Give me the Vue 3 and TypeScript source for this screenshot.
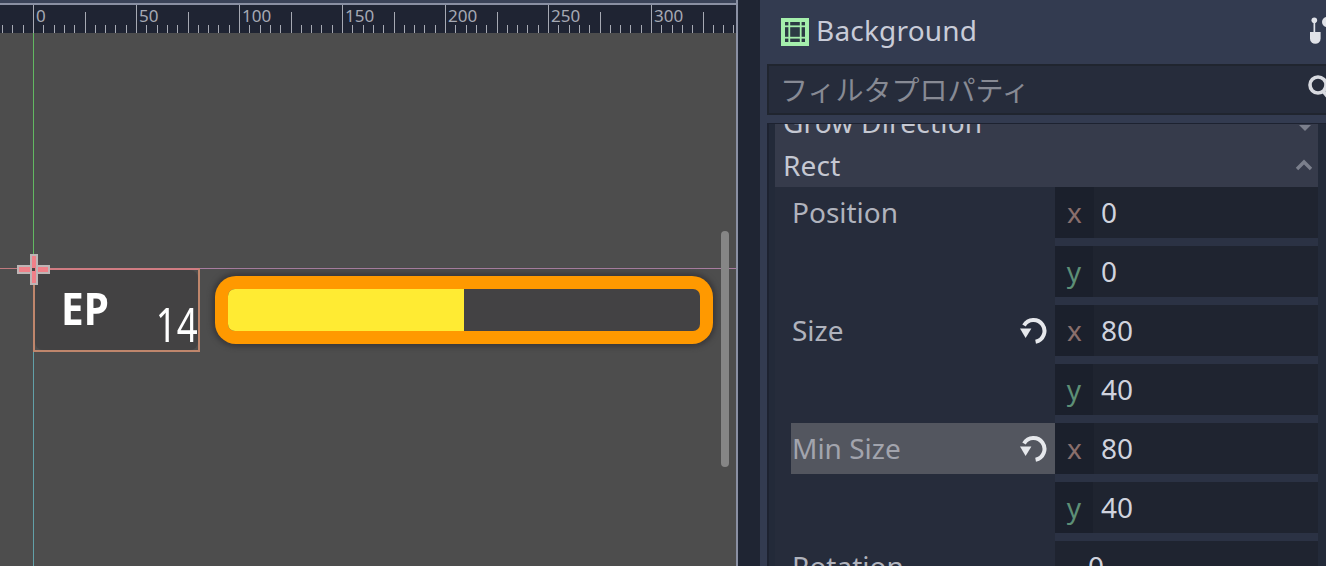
<template>
  <div class="editor">
    <section class="viewport">
      <svg class="ruler" width="736" height="28">
        <line
          v-for="t in ticks"
          :key="t.x"
          :x1="t.x"
          :x2="t.x"
          :y1="t.top"
          y2="28"
          stroke="#a6a9b3"
          stroke-width="1"
        />
        <text v-for="l in rulerLabels" :key="l.text" :x="l.x" y="17" class="ruler-label">{{ l.text }}</text>
      </svg>
      <div class="canvas">
        <div class="guide-h"></div>
        <div class="guide-v"></div>
        <div class="ep-box">
          <span class="ep-title">EP</span>
          <span class="ep-count">14</span>
        </div>
        <div class="bar">
          <div class="bar-track">
            <div class="bar-fill" :style="{ width: barPercent + '%' }"></div>
          </div>
        </div>
        <div class="pivot">
          <i class="pivot-h"></i>
          <i class="pivot-v"></i>
          <i class="pivot-dot"></i>
        </div>
        <div class="v-scroll"></div>
      </div>
    </section>

    <div class="splitter"></div>

    <aside class="inspector">
      <header class="node-row">
        <svg class="node-icon" width="28" height="28" viewBox="0 0 28 28">
          <rect width="28" height="28" fill="#a5efac" />
          <g fill="#2c3a44">
            <template v-for="cx in gridCells" :key="cx[0]">
              <rect v-for="cy in gridCells" :key="cy[0]" :x="cx[0]" :y="cy[0]" :width="cx[1]" :height="cy[1]" />
            </template>
          </g>
        </svg>
        <span class="node-name">Background</span>
        <svg class="node-tool" width="16" height="30" viewBox="0 0 16 30">
          <circle cx="4.3" cy="3.2" r="2.8" fill="#e0e2e8" />
          <rect x="3.5" y="5" width="1.7" height="11" fill="#e0e2e8" />
          <path d="M0 15h10.6v6.5a5.3 5.3 0 0 1-10.6 0z" fill="#e0e2e8" />
          <circle cx="17" cy="5" r="5" fill="#e0e2e8" />
        </svg>
      </header>

      <div class="filter">
        <span class="filter-text">フィルタプロパティ</span>
        <svg class="search" width="18" height="26" viewBox="0 0 18 26">
          <circle cx="10" cy="11" r="8" fill="none" stroke="#d8dae0" stroke-width="3.6" />
          <path d="M15 17l5 6" stroke="#d8dae0" stroke-width="3.6" />
        </svg>
      </div>

      <div class="list-wrap">
        <div class="list">
          <div class="section clipped">
            <span class="section-name">Grow Direction</span>
            <svg class="caret-down" width="14" height="8" viewBox="0 0 14 8"><path d="M1 0h12L7 6z" fill="#7b7f8c" /></svg>
          </div>
          <div class="section rect">
            <span class="section-name">Rect</span>
            <svg class="caret-up" width="18" height="12" viewBox="0 0 18 12"><path d="M2 10l7-7 7 7" fill="none" stroke="#7b7f8c" stroke-width="3.4" /></svg>
          </div>

          <div v-for="prop in props" :key="prop.name" class="prop">
            <div class="prop-label" :class="{ hovered: prop.hovered }">
              <span>{{ prop.name }}</span>
              <svg v-if="prop.changed" class="reset" width="28" height="26" viewBox="0 0 28 26">
                <path d="M4 7.4A11 11 0 1 1 15.6 23.8" fill="none" stroke="#e6e8ec" stroke-width="4" />
                <path d="M0 10.6H11.4L5.6 20z" fill="#e6e8ec" />
              </svg>
            </div>
            <div class="prop-fields">
              <div v-for="f in prop.fields" :key="f.axis" class="field">
                <span v-if="f.axis !== '-'" class="axis" :class="f.axis">{{ f.axis }}</span>
                <span class="value" :class="{ bare: f.axis === '-' }">{{ f.value }}</span>
              </div>
            </div>
          </div>
        </div>
      </div>
    </aside>
  </div>
</template>

<script setup lang="ts">
interface Field {
  axis: string;
  value: string;
}

interface Prop {
  name: string;
  changed?: boolean;
  hovered?: boolean;
  fields: Field[];
}

const ORIGIN = 33;
const PX_PER_UNIT = 2.06;

const barPercent = 50;

// offset and size of the dark cells in the node icon
const gridCells: [number, number][] = [[4, 3.4], [9.2, 9.6], [20.6, 3.4]];

const ticks: { x: number; top: number }[] = [];
for (let u = -15; u <= 340; u += 5) {
  const x = Math.round(ORIGIN + u * PX_PER_UNIT) + 0.5;
  let top = 20;
  if (u % 50 === 0) top = 0;
  else if (u % 25 === 0) top = 7;
  ticks.push({ x, top });
}

const rulerLabels = [0, 50, 100, 150, 200, 250, 300].map((v) => ({
  text: String(v),
  x: ORIGIN + v * PX_PER_UNIT + 3,
}));

const props: Prop[] = [
  { name: 'Position', fields: [{ axis: 'x', value: '0' }, { axis: 'y', value: '0' }] },
  { name: 'Size', changed: true, fields: [{ axis: 'x', value: '80' }, { axis: 'y', value: '40' }] },
  { name: 'Min Size', changed: true, hovered: true, fields: [{ axis: 'x', value: '80' }, { axis: 'y', value: '40' }] },
  { name: 'Rotation', fields: [{ axis: '-', value: '0' }] },
];
</script>

<style scoped>
.editor {
  display: grid;
  grid-template-columns: 738px 22px 566px;
  width: 1326px;
  height: 566px;
  overflow: hidden;
  background: #1f2533;
  font-family: "Noto Sans", "Noto Sans CJK JP", sans-serif;
}

.viewport {
  display: flex;
  flex-direction: column;
  height: 566px;
  padding-top: 3px;
  border-right: 2px solid #8a90a3;
  box-sizing: border-box;
  background: #3a4358;
}

.ruler {
  display: block;
  flex: none;
  border-top: 2px solid #8a90a3;
  background: #1f2433;
}

.ruler-label {
  font-family: "Noto Sans", sans-serif;
  font-size: 17px;
  fill: #a6a9b3;
}

.canvas {
  position: relative;
  flex: 1;
  background: #4d4d4d;
  overflow: hidden;
}

.guide-h {
  position: absolute;
  left: 0;
  right: 0;
  top: 235px;
  height: 1px;
  background: linear-gradient(90deg, #c07a7e 0 33px, #a87da0 33px);
}

.guide-v {
  position: absolute;
  left: 33px;
  top: 0;
  bottom: 0;
  width: 1px;
  background: linear-gradient(#62b862 0 235px, #62a0a8 235px);
}

.ep-box {
  position: absolute;
  left: 33px;
  top: 235px;
  width: 167px;
  height: 84px;
  box-sizing: border-box;
  border: 2px solid #bf866c;
  border-top-color: #d07c82;
  color: #fff;
}

.ep-box::before {
  content: "";
  position: absolute;
  inset: 0;
  background: #434243;
  border-radius: 8px;
}

.ep-title {
  position: absolute;
  left: 26px;
  top: 13px;
  font-size: 44px;
  line-height: 50px;
  font-weight: 700;
  transform: scaleX(0.92);
  transform-origin: left;
  filter: blur(0.6px);
}

.ep-count {
  position: absolute;
  right: 0;
  top: 24px;
  font-size: 47px;
  line-height: 60px;
  font-weight: 400;
  transform: scaleX(0.78);
  transform-origin: right;
}

.bar {
  position: absolute;
  left: 215px;
  top: 243px;
  width: 498px;
  height: 68px;
  padding: 13px;
  box-sizing: border-box;
  background: #ff9900;
  border-radius: 21px;
  box-shadow: 0 0 5px 3px #3a393b;
}

.bar-track {
  height: 100%;
  background: #434244;
  border-radius: 7px;
  overflow: hidden;
}

.bar-fill {
  height: 100%;
  background: #ffeb33;
}

.pivot {
  position: absolute;
  left: 17px;
  top: 221px;
  width: 33px;
  height: 31px;
}

.pivot-h,
.pivot-v {
  position: absolute;
  background: #f08088;
  border: 2px solid #bdb5b5;
  box-sizing: border-box;
}

.pivot-h {
  left: 0;
  top: 11px;
  width: 33px;
  height: 9px;
}

.pivot-v {
  left: 13px;
  top: 0;
  width: 8px;
  height: 31px;
}

.pivot-dot {
  position: absolute;
  left: 15px;
  top: 14px;
  width: 3px;
  height: 3px;
  background: #4a4444;
}

.v-scroll {
  position: absolute;
  left: 721px;
  top: 198px;
  width: 8px;
  height: 236px;
  background: #868686;
  border-radius: 4px;
}

.splitter {
  background: #1f2533;
}

.inspector {
  display: flex;
  flex-direction: column;
  height: 566px;
  background: #333b50;
  overflow: hidden;
}

.node-row {
  display: flex;
  align-items: center;
  flex: none;
  height: 64px;
  padding-left: 21px;
}

.node-name {
  margin: 0 0 4px 7px;
  font-size: 28px;
  letter-spacing: 0.2px;
  color: #c9ccd8;
}

.node-tool {
  margin-left: auto;
}

.filter {
  display: flex;
  align-items: center;
  justify-content: space-between;
  flex: none;
  height: 51px;
  margin-left: 7px;
  padding-left: 11px;
  box-sizing: border-box;
  background: #262c3b;
  border: 2px solid #20252f;
  border-right: 0;
}

.filter-text {
  font-size: 28px;
  line-height: 1;
  margin-top: 1px;
  color: #878a94;
}

.search {
  margin-top: -6px;
}

.list-wrap {
  flex: 1;
  min-height: 0;
  margin: 8px 0 0 7px;
  padding: 0 8px 0 6px;
  background: #232a39;
  border-top: 1px solid #1d2230;
  border-left: 2px solid #1d2230;
  box-sizing: border-box;
  overflow: hidden;
}

.list {
  background: #262c3b;
}

.section {
  display: flex;
  align-items: center;
  justify-content: space-between;
  padding: 0 5px 0 8px;
  background: #363b4b;
  color: #c5c8d2;
  font-size: 28px;
}

.section-name {
  letter-spacing: 0.2px;
}

.section.clipped {
  height: 13px;
  margin-top: -1px;
  align-items: flex-end;
  overflow: hidden;
}

.section.clipped .section-name {
  margin-bottom: -5px;
}

.caret-down {
  margin-bottom: 3px;
  margin-right: 1px;
}

.section.rect {
  height: 51px;
  padding-top: 7px;
  box-sizing: border-box;
}

.prop {
  display: grid;
  grid-template-columns: 280px 263px;
}

.prop-label {
  display: flex;
  align-items: center;
  justify-content: space-between;
  height: 51px;
  margin-left: 16px;
  padding: 0 7px 0 1px;
  font-size: 28px;
  color: #b0b3bd;
}

.prop-label span {
  margin-bottom: 1px;
}

.prop-label.hovered {
  background: #53565f;
  color: #a2a4ad;
}

.prop-fields {
  display: flex;
  flex-direction: column;
  gap: 8px;
  padding-bottom: 8px;
  background: #2b3244;
}

.field {
  display: flex;
  align-items: center;
  height: 51px;
  background: #1f2430;
  font-size: 28px;
  color: #d0d3de;
}

.axis {
  width: 39px;
  height: 100%;
  display: flex;
  align-items: center;
  justify-content: center;
  padding-bottom: 1px;
  box-sizing: border-box;
  background: #1b202c;
}

.axis.x {
  color: #8a6f6c;
}

.axis.y {
  width: 38px;
  margin-right: 1px;
  color: #5d8f76;
}

.value {
  margin-left: 7px;
  padding-bottom: 1px;
}

.value.bare {
  margin-left: 33px;
}
</style>

<style>
html,
body {
  margin: 0;
  overflow: hidden;
}
</style>
